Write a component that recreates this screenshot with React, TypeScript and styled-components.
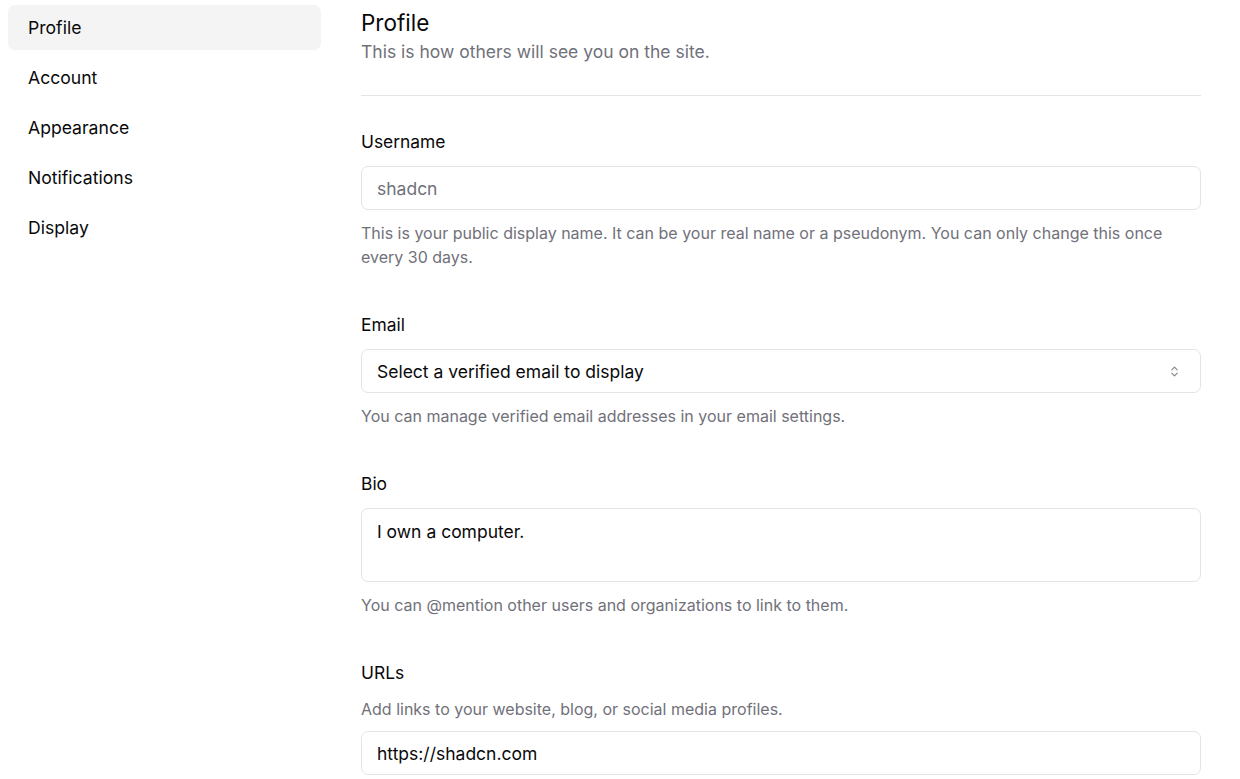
import React from 'react';
import styled, { createGlobalStyle } from 'styled-components';
import { ChevronsUpDown } from 'lucide-react';

const GlobalStyle = createGlobalStyle`
  * { box-sizing: border-box; }
  body {
    margin: 0;
    background: #fff;
    color: #09090b;
    font-family: Inter, "Noto Sans", sans-serif;
  }
`;

const Page = styled.div`
  display: flex;
  gap: 40px;
  padding: 5px 8px 0 8px;
`;

const Sidebar = styled.nav`
  width: 313px;
  display: flex;
  flex-direction: column;
  gap: 5px;
`;

const NavItem = styled.a<{ active?: boolean }>`
  height: 45px;
  display: flex;
  align-items: center;
  padding: 0 20px;
  border-radius: 7px;
  font-size: 17.6px;
  color: #09090b;
  background: ${({ active }) => (active ? '#f4f4f5' : 'transparent')};
  cursor: pointer;
`;

const Main = styled.main`
  width: 840px;
`;

const Header = styled.div`
  padding-top: 3px;
  display: flex;
  flex-direction: column;
  gap: 2px;
`;

const Title = styled.h3`
  margin: 0;
  font-size: 22.5px;
  font-weight: 400;
  line-height: 30px;
`;

const Subtitle = styled.p`
  margin: 0;
  font-size: 17.5px;
  line-height: 24px;
  color: #71717a;
`;

const Divider = styled.div`
  height: 1px;
  background: #e4e4e7;
  margin: 31px 0 33px;
`;

const Form = styled.form`
  display: flex;
  flex-direction: column;
  gap: 43px;
`;

const FormItem = styled.div`
  display: flex;
  flex-direction: column;
  gap: 11px;
`;

const Label = styled.label`
  font-size: 17.4px;
  line-height: 24px;
  padding-top: 1px;
  margin-bottom: 1px;
`;

const Description = styled.p<{ before?: boolean }>`
  margin: 0 0 ${({ before }) => (before ? '-1px' : '0')};
  font-size: 16px;
  line-height: 24px;
  color: #71717a;
`;

const Input = styled.input`
  height: 44px;
  width: 100%;
  padding: 0 15px;
  border: 1px solid #e4e4e7;
  border-radius: 7px;
  font-family: inherit;
  font-size: 17.5px;
  color: #09090b;
  outline: none;
  &::placeholder {
    color: #71717a;
  }
`;

const Select = styled.div`
  height: 44px;
  display: flex;
  align-items: center;
  justify-content: space-between;
  padding: 0 19px 0 15px;
  border: 1px solid #e4e4e7;
  border-radius: 7px;
  font-size: 17.5px;
  svg {
    opacity: 0.5;
  }
`;

const TextArea = styled.textarea`
  height: 74px;
  width: 100%;
  padding: 11px 15px;
  border: 1px solid #e4e4e7;
  border-radius: 7px;
  font-family: inherit;
  font-size: 17.5px;
  line-height: 24px;
  color: #09090b;
  resize: none;
  outline: none;
`;

const navItems = ['Profile', 'Account', 'Appearance', 'Notifications', 'Display'];

export default function App() {
  return (
    <Page>
      <GlobalStyle />
      <Sidebar>
        {navItems.map((item) => (
          <NavItem key={item} active={item === 'Profile'}>
            {item}
          </NavItem>
        ))}
      </Sidebar>
      <Main>
        <Header>
          <Title>Profile</Title>
          <Subtitle>This is how others will see you on the site.</Subtitle>
        </Header>
        <Divider />
        <Form>
          <FormItem>
            <Label>Username</Label>
            <Input placeholder="shadcn" />
            <Description>
              This is your public display name. It can be your real name or a pseudonym. You can
              only change this once every 30 days.
            </Description>
          </FormItem>
          <FormItem>
            <Label>Email</Label>
            <Select>
              <span>Select a verified email to display</span>
              <ChevronsUpDown size={13} />
            </Select>
            <Description>You can manage verified email addresses in your email settings.</Description>
          </FormItem>
          <FormItem>
            <Label>Bio</Label>
            <TextArea defaultValue="I own a computer." />
            <Description>You can @mention other users and organizations to link to them.</Description>
          </FormItem>
          <FormItem>
            <Label>URLs</Label>
            <Description before>Add links to your website, blog, or social media profiles.</Description>
            <Input defaultValue="https://shadcn.com" />
          </FormItem>
        </Form>
      </Main>
    </Page>
  );
}
